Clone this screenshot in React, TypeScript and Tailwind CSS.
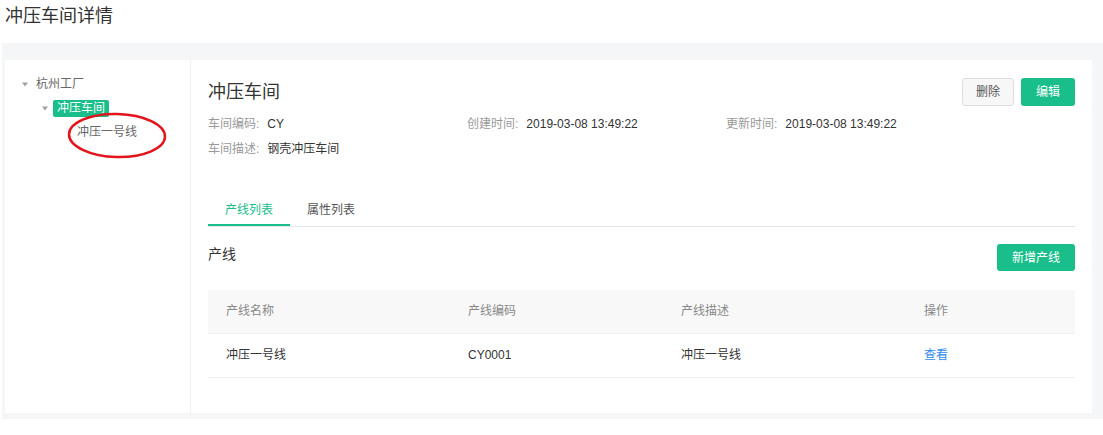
import React from "react";

const lines = [
  { name: "冲压一号线", code: "CY0001", desc: "冲压一号线" },
];

const Caret = () => (
  <svg width="6" height="5" viewBox="0 0 6 5" className="shrink-0">
    <path d="M0 0.5h6L3 4.5z" fill="#a0a0a0" />
  </svg>
);

const InfoItem = ({ label, value }: { label: string; value: string }) => (
  <div className="w-[259px] flex">
    <span className="text-[#999]">{label}:</span>
    <span className="ml-[8px] text-[#333]">{value}</span>
  </div>
);

export default function App() {
  return (
    <div className="w-[1103px] h-[435px] bg-white overflow-hidden font-['Liberation_Sans','Noto_Sans_CJK_SC',sans-serif] text-[12px]">
      {/* page title */}
      <h1 className="pl-[5px] pt-[4px] h-[43px] text-[18px] leading-[24px] text-[#333]">冲压车间详情</h1>

      <div className="ml-[2px] bg-[#f5f6f8] pt-[17px] pl-[3px] pr-[11px] pb-[6px]">
        <div className="flex bg-white h-[353px]">
          {/* tree */}
          <div className="relative w-[186px] border-r border-[#eef0f3] pt-[12px] pl-[17px] text-[#666]">
            <div className="h-[24px] flex items-center gap-[8px]">
              <Caret />
              <span>杭州工厂</span>
            </div>
            <div className="h-[24px] flex items-center pl-[20px] gap-[5px]">
              <Caret />
              <span className="bg-[#19be8b] text-white rounded-[2px] px-[4px] h-[17px] leading-[17px]">冲压车间</span>
            </div>
            <div className="h-[24px] flex items-center pl-[55px]">
              <span>冲压一号线</span>
            </div>
            {/* hand-drawn marker */}
            <svg className="absolute left-[60px] top-[52px]" width="104" height="50" viewBox="0 0 104 50">
              <ellipse cx="52" cy="23.5" rx="48" ry="21.5" fill="none" stroke="#e3141c" strokeWidth="2.5" transform="rotate(1.5 52 23.5)" />
            </svg>
          </div>

          {/* detail */}
          <div className="flex-1 px-[17px] pt-[18px]">
            <div className="flex justify-between items-start">
              <h2 className="text-[18px] leading-[28px] text-[#333]">冲压车间</h2>
              <div className="flex gap-[7px]">
                <button className="w-[52px] h-[28px] rounded-[3px] border border-[#dcdee2] bg-[#f7f7f7] text-[#555]">删除</button>
                <button className="w-[54px] h-[28px] rounded-[3px] bg-[#19be8b] text-white">编辑</button>
              </div>
            </div>

            <div className="mt-[6px] leading-[25px]">
              <div className="flex h-[25px]">
                <InfoItem label="车间编码" value="CY" />
                <InfoItem label="创建时间" value="2019-03-08 13:49:22" />
                <InfoItem label="更新时间" value="2019-03-08 13:49:22" />
              </div>
              <div className="flex h-[25px]">
                <InfoItem label="车间描述" value="钢壳冲压车间" />
              </div>
            </div>

            {/* tabs */}
            <div className="mt-[34px] flex border-b border-[#e4e7ed]">
              <div className="h-[30px] leading-[28px] px-[17px] border-b-2 border-[#19be8b] text-[#19be8b] -mb-px">产线列表</div>
              <div className="h-[30px] leading-[28px] px-[17px] text-[#555]">属性列表</div>
            </div>

            <div className="mt-[17px] flex justify-between items-start">
              <span className="text-[14px] leading-[20px] text-[#333]">产线</span>
              <button className="w-[78px] h-[27px] rounded-[3px] bg-[#19be8b] text-white">新增产线</button>
            </div>

            {/* table */}
            <table className="mt-[19px] w-full border-collapse text-left">
              <thead>
                <tr className="h-[43px] bg-[#f8f8f9] border-b border-[#eef0f3] text-[#888]">
                  <th className="w-[242px] pl-[18px] font-normal">产线名称</th>
                  <th className="w-[213px] pl-[18px] font-normal">产线编码</th>
                  <th className="w-[243px] pl-[18px] font-normal">产线描述</th>
                  <th className="pl-[18px] font-normal">操作</th>
                </tr>
              </thead>
              <tbody>
                {lines.map((l) => (
                  <tr key={l.code} className="h-[44px] border-b border-[#eef0f3] text-[#333]">
                    <td className="pl-[18px]">{l.name}</td>
                    <td className="pl-[18px]">{l.code}</td>
                    <td className="pl-[18px]">{l.desc}</td>
                    <td className="pl-[18px]">
                      <a className="text-[#2d8cf0] cursor-pointer">查看</a>
                    </td>
                  </tr>
                ))}
              </tbody>
            </table>
          </div>
        </div>
      </div>
    </div>
  );
}
